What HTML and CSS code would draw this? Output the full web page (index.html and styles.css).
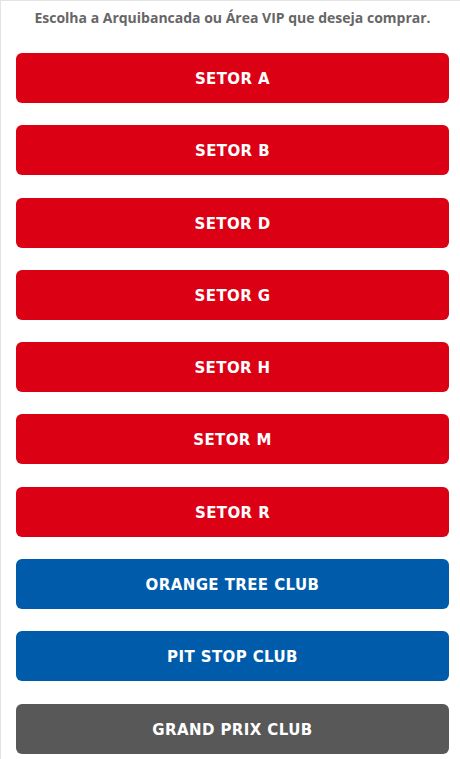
FILE: index.html
```html
<!DOCTYPE html>
<html lang="pt">
<head>
<meta charset="utf-8">
<link rel="stylesheet" href="styles.css">
</head>
<body>
<div class="page">
  <p class="intro">Escolha a Arquibancada ou Área VIP que deseja comprar.</p>
  <div class="list">
    <a class="btn red">SETOR A</a>
    <a class="btn red">SETOR B</a>
    <a class="btn red">SETOR D</a>
    <a class="btn red">SETOR G</a>
    <a class="btn red">SETOR H</a>
    <a class="btn red">SETOR M</a>
    <a class="btn red">SETOR R</a>
    <a class="btn blue">ORANGE TREE CLUB</a>
    <a class="btn blue">PIT STOP CLUB</a>
    <a class="btn gray">GRAND PRIX CLUB</a>
  </div>
</div>
</body>
</html>
```
FILE: styles.css
```css
html, body {
  margin: 0;
  padding: 0;
  background: #fff;
}
.page {
  width: 460px;
  height: 759px;
  box-sizing: border-box;
  border-left: 1px solid #e3e3e3;
  border-top: 1px solid #e3e3e3;
  padding: 0 11px 0 15px;
  overflow: hidden;
}
.intro {
  margin: 0;
  padding-top: 8px;
  height: 44px;
  text-align: center;
  font-family: "Open Sans", sans-serif;
  font-weight: 700;
  font-size: 14px;
  line-height: 18px;
  color: #666;
}
.list {
  display: flex;
  flex-direction: column;
  gap: 22.3px;
}
.btn {
  display: flex;
  align-items: center;
  justify-content: center;
  height: 50px;
  box-sizing: border-box;
  padding-top: 2px;
  border-radius: 6px;
  color: #fff;
  font-family: "DejaVu Sans", sans-serif;
  font-weight: 700;
  font-size: 15px;
  letter-spacing: 0.4px;
}
.red { background: #dc0014; }
.blue { background: #005caa; }
.gray { background: #585858; }
```
